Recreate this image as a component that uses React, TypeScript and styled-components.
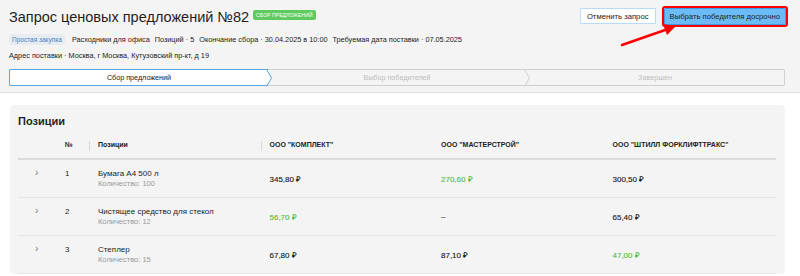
import React from 'react'
import styled, { createGlobalStyle } from 'styled-components'

const GlobalStyle = createGlobalStyle`
  html, body {
    margin: 0;
    padding: 0;
    background: #fff;
    font-family: "Liberation Sans", Arial, sans-serif;
    color: #222;
  }
`

const positions = [
  { n: 1, name: 'Бумага А4 500 л', qty: 100, prices: ['345,80 ₽', '270,60 ₽', '300,50 ₽'], best: 1 },
  { n: 2, name: 'Чистящее средство для стекол', qty: 12, prices: ['56,70 ₽', '–', '65,40 ₽'], best: 0 },
  { n: 3, name: 'Степлер', qty: 15, prices: ['67,80 ₽', '87,10 ₽', '47,00 ₽'], best: 2 },
]

const suppliers = ['ООО "КОМПЛЕКТ"', 'ООО "МАСТЕРСТРОЙ"', 'ООО "ШТИЛЛ ФОРКЛИФТТРАКС"']

const steps = ['Сбор предложений', 'Выбор победителей', 'Завершен']

export default function App() {
  return (
    <>
      <GlobalStyle />
      <Header>
        <TopRow>
          <div>
            <TitleRow>
              <Title>Запрос ценовых предложений №82</Title>
              <StatusBadge>СБОР ПРЕДЛОЖЕНИЙ</StatusBadge>
            </TitleRow>
            <MetaRow>
              <TypeTag>Простая закупка</TypeTag>
              <span>Расходники для офиса</span>
              <span>Позиций · 5</span>
              <span>Окончание сбора · 30.04.2025 в 10:00</span>
              <span>Требуемая дата поставки · 07.05.2025</span>
            </MetaRow>
            <AddressRow>Адрес поставки · Москва, г Москва, Кутузовский пр-кт, д 19</AddressRow>
          </div>
          <Actions>
            <Button>Отменить запрос</Button>
            <Button $primary>Выбрать победителя досрочно</Button>
          </Actions>
        </TopRow>
        <Stepper>
          {steps.map((s, i) => (
            <Step key={s} $active={i === 0} $first={i === 0} $last={i === steps.length - 1}>
              {s}
              {i < steps.length - 1 && (
                <Chevron width="8" height="18" viewBox="0 0 8 18">
                  <polyline
                    points="0.5,0.5 5.5,9 0.5,17.5"
                    fill={i === 0 ? '#fff' : '#f4f4f4'}
                    stroke={i === 0 ? '#5aa5e2' : '#cfcfcf'}
                    strokeWidth="1"
                  />
                </Chevron>
              )}
            </Step>
          ))}
        </Stepper>
        <Annotation width="70" height="30" viewBox="0 0 70 30">
          <line x1="4" y1="25" x2="50" y2="9" stroke="#f00" strokeWidth="2.5" strokeLinecap="round" />
          <polygon points="58,6 45,4 49,15" fill="#f00" />
        </Annotation>
      </Header>

      <Body>
        <Card>
          <CardTitle>Позиции</CardTitle>
          <Table>
            <HeadCell />
            <HeadCell $divider>№</HeadCell>
            <HeadCell $divider>Позиции</HeadCell>
            {suppliers.map(s => (
              <HeadCell key={s}>{s}</HeadCell>
            ))}
            {positions.map(p => (
              <React.Fragment key={p.n}>
                <Cell $top>
                  <Expand>›</Expand>
                </Cell>
                <Cell $top>{p.n}</Cell>
                <Cell $top>
                  <ItemName>{p.name}</ItemName>
                  <Qty>Количество: {p.qty}</Qty>
                </Cell>
                {p.prices.map((pr, i) => (
                  <Cell key={i}>
                    <Price $best={i === p.best}>{pr}</Price>
                  </Cell>
                ))}
              </React.Fragment>
            ))}
          </Table>
        </Card>
      </Body>
    </>
  )
}

const Header = styled.header`
  position: relative;
  background: #f4f4f4;
  border-bottom: 1px solid #e3e3e3;
  padding: 6px 14px 8px 9px;
  height: 78px;
`

const TopRow = styled.div`
  display: flex;
  justify-content: space-between;
  align-items: flex-start;
`

const TitleRow = styled.div`
  display: flex;
  align-items: center;
  gap: 4px;
  height: 22px;
`

const Title = styled.h1`
  margin: 0;
  font-size: 14.5px;
  font-weight: 400;
  color: #1f1f1f;
`

const StatusBadge = styled.span`
  background: #5fcb5f;
  color: #fff;
  font-size: 5px;
  padding: 2px 3px;
  border-radius: 2px;
  margin-top: -5px;
  letter-spacing: 0.1px;
`

const MetaRow = styled.div`
  display: flex;
  align-items: center;
  gap: 5px;
  font-size: 7.3px;
  color: #222;
  margin-top: 6px;
`

const TypeTag = styled.span`
  background: #e7ecf2;
  color: #4a7fc2;
  font-size: 6.5px;
  padding: 2px 3px;
  border-radius: 3px;
  margin-right: 2px;
`

const AddressRow = styled.div`
  font-size: 7.3px;
  margin-top: 6px;
`

const Actions = styled.div`
  display: flex;
  gap: 8px;
  padding-top: 2px;
`

const Button = styled.button<{ $primary?: boolean }>`
  font-family: inherit;
  font-size: 7.7px;
  color: #222;
  height: ${p => (p.$primary ? '17px' : '16px')};
  padding: 0 ${p => (p.$primary ? '5px' : '6px')};
  background: ${p => (p.$primary ? '#6bbcf6' : '#fff')};
  border: 1px solid ${p => (p.$primary ? '#3f9be2' : '#b9dcf6')};
  outline: ${p => (p.$primary ? '2px solid #f00' : 'none')};
  border-radius: 1px;
  cursor: pointer;
`

const Stepper = styled.div`
  display: flex;
  margin-top: 9px;
  height: 17px;
  margin-right: 1px;
`

const Step = styled.div<{ $active?: boolean; $first?: boolean; $last?: boolean }>`
  position: relative;
  flex: 1;
  display: flex;
  align-items: center;
  justify-content: center;
  font-size: 7.2px;
  color: ${p => (p.$active ? '#222' : '#bdbdbd')};
  background: ${p => (p.$active ? '#fff' : '#f4f4f4')};
  border-top: 1px solid ${p => (p.$active ? '#5aa5e2' : '#cfcfcf')};
  border-bottom: 1px solid ${p => (p.$active ? '#5aa5e2' : '#cfcfcf')};
  border-left: ${p => (p.$first ? '1px solid #5aa5e2' : 'none')};
  border-right: ${p => (p.$last ? '1px solid #cfcfcf' : 'none')};
  border-radius: ${p => (p.$first ? '2px 0 0 2px' : p.$last ? '0 2px 2px 0' : '0')};
`

const Chevron = styled.svg`
  position: absolute;
  right: -6px;
  top: -1px;
  z-index: 1;
`

const Annotation = styled.svg`
  position: absolute;
  left: 618px;
  top: 20px;
`

const Body = styled.main`
  padding: 12px 15px 0 10px;
`

const Card = styled.section`
  background: #f4f4f4;
  border-radius: 4px;
  padding: 9px 9px 0 8px;
`

const CardTitle = styled.h2`
  margin: 0;
  font-size: 11px;
  font-weight: 700;
  color: #1f1f1f;
  padding: 1px 0 0;
  height: 22px;
`

const Table = styled.div`
  display: grid;
  grid-template-columns: 39px 33px repeat(4, 1fr);
`

const HeadCell = styled.div<{ $divider?: boolean }>`
  position: relative;
  font-size: 7px;
  font-weight: 700;
  color: #222;
  padding: 4px 8px 0;
  box-sizing: border-box;
  border-bottom: 2px solid #dcdcdc;
  height: 23px;

  &::after {
    content: '';
    display: ${p => (p.$divider ? 'block' : 'none')};
    position: absolute;
    right: 0;
    top: 4px;
    width: 1px;
    height: 10px;
    background: #d8d8d8;
  }
`

const Cell = styled.div<{ $top?: boolean }>`
  display: flex;
  flex-direction: column;
  justify-content: ${p => (p.$top ? 'flex-start' : 'center')};
  padding: ${p => (p.$top ? '9px 8px 0' : '0 8px')};
  height: 38px;
  box-sizing: border-box;
  border-bottom: 1px solid #e6e6e6;
  font-size: 8px;
  color: #222;
`

const Expand = styled.span`
  color: #777;
  font-size: 10px;
  line-height: 8px;
  padding-left: 9px;
`

const ItemName = styled.span`
  font-size: 8px;
  color: #222;
`

const Qty = styled.span`
  font-size: 7.5px;
  color: #9a9a9a;
  margin-top: 1px;
`

const Price = styled.span<{ $best?: boolean }>`
  font-size: 8px;
  font-weight: 400;
  color: ${p => (p.$best ? '#4cb944' : '#111')};
  -webkit-text-stroke: 0.1px currentColor;
`
